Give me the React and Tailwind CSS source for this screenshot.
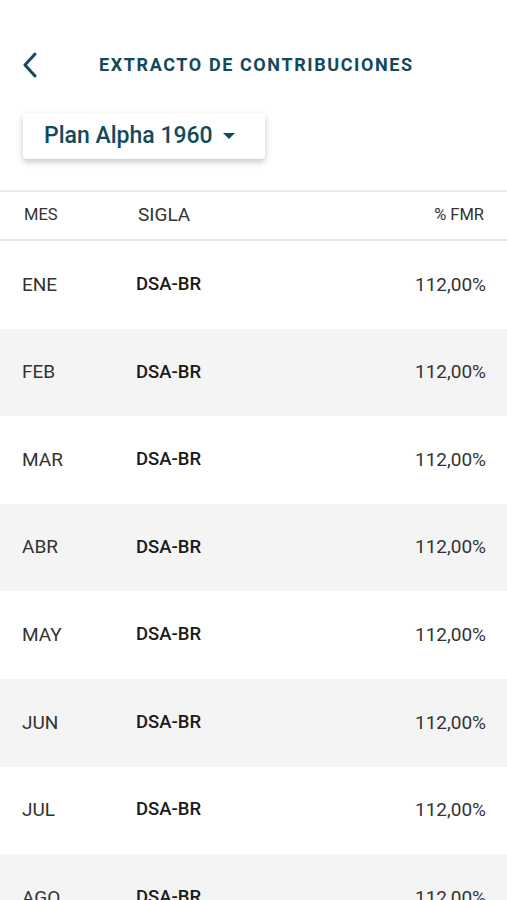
import React from "react";

const months = ["ENE", "FEB", "MAR", "ABR", "MAY", "JUN", "JUL", "AGO", "SEP"];

export default function App() {
  return (
    <div className="w-[507px] h-[900px] overflow-hidden bg-white" style={{ fontFamily: "Roboto, 'Noto Sans', sans-serif" }}>
      <div className="pt-[52px]">
        <div className="flex items-center h-[26px]">
          <div className="w-[99px] flex pl-[21px]">
            <svg width="18" height="26" viewBox="0 0 18 26">
              <path d="M14 2 L4 13 L14 24" fill="none" stroke="#124a5c" strokeWidth="3" strokeLinecap="round" strokeLinejoin="round" />
            </svg>
          </div>
          <div className="text-[18px] font-bold tracking-[1.6px] text-[#124a5c] -mt-[2px]">EXTRACTO DE CONTRIBUCIONES</div>
        </div>
      </div>
      <div className="px-[23px] mt-[35px]">
        <div className="w-[242px] h-[46px] rounded-[4px] bg-white shadow-[0_3px_6px_rgba(0,0,0,0.22)] flex items-center pl-[21px]">
          <span className="text-[23px] font-medium text-[#124a5c]">Plan Alpha 1960</span>
          <svg className="ml-[10px]" width="12" height="6" viewBox="0 0 12 6">
            <path d="M0 0 L12 0 L6 6 Z" fill="#124a5c" />
          </svg>
        </div>
      </div>
      <div className="mt-[31px] border-t-2 border-[#ececec] border-b-2 border-b-[#e6e6e6] h-[51px] flex items-center text-[#333]">
        <div className="w-[138px] pl-[24px] text-[16.5px]">MES</div>
        <div className="flex-1 text-[19px]">SIGLA</div>
        <div className="pr-[23px] text-[16.5px]">% FMR</div>
      </div>
      {months.map((m, i) => (
        <div key={m} className={`h-[87.6px] flex items-center ${i % 2 === 1 ? "bg-[#f4f4f4]" : "bg-white"}`}>
          <div className="w-[136px] pl-[22px] text-[19px] text-[#333]">{m}</div>
          <div className="flex-1 text-[18.5px] font-medium text-[#1a1a1a]">DSA-BR</div>
          <div className="pr-[21px] text-[19px] text-[#333]">112,00%</div>
        </div>
      ))}
    </div>
  );
}
